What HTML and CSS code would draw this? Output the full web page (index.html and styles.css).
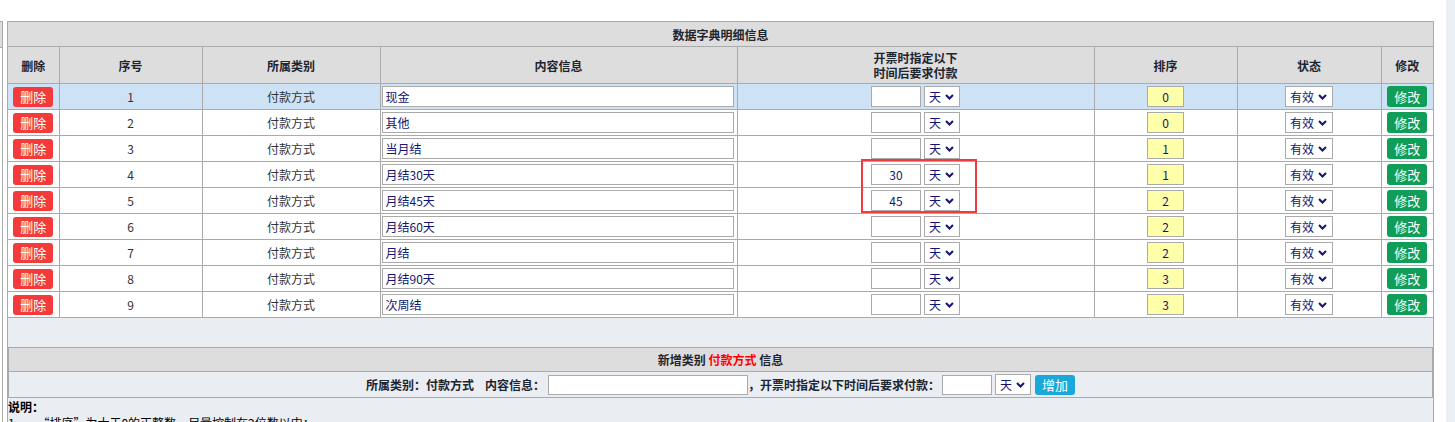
FILE: index.html
```html
<!DOCTYPE html>
<html>

<head>
    <meta charset="utf-8">
    <title>数据字典明细信息</title>
    <link rel="stylesheet" href="styles.css">
</head>

<body>
<div class="page">
    <div class="side">
        <div class="side-head"></div>
    </div>

    <div class="main">
        <table class="grid">
            <colgroup>
                <col style="width:51px">
                <col style="width:143px">
                <col style="width:178px">
                <col style="width:357px">
                <col style="width:357px">
                <col style="width:143px">
                <col style="width:144px">
                <col style="width:52px">
            </colgroup>
            <tr class="title-row">
                <th colspan="8">数据字典明细信息</th>
            </tr>
            <tr class="head-row">
                <th>删除</th>
                <th>序号</th>
                <th>所属类别</th>
                <th>内容信息</th>
                <th>开票时指定以下<br>时间后要求付款</th>
                <th>排序</th>
                <th>状态</th>
                <th>修改</th>
            </tr>
            <tr class="cur">
                <td><button class="btn del">删除</button></td>
                <td>1</td>
                <td>付款方式</td>
                <td class="left"><input class="txt" value="现金"></td>
                <td><input class="days" value=""><div class="sel day"><span>天</span><svg width="9" height="6" viewBox="0 0 9 6"><path d="M1 1 L4.5 4.5 L8 1" fill="none" stroke="#14146e" stroke-width="2"/></svg></div></td>
                <td><input class="ord" value="0"></td>
                <td><div class="sel state"><span>有效</span><svg width="9" height="6" viewBox="0 0 9 6"><path d="M1 1 L4.5 4.5 L8 1" fill="none" stroke="#14146e" stroke-width="2"/></svg></div></td>
                <td><button class="btn edit">修改</button></td>
            </tr>
            <tr>
                <td><button class="btn del">删除</button></td>
                <td>2</td>
                <td>付款方式</td>
                <td class="left"><input class="txt" value="其他"></td>
                <td><input class="days" value=""><div class="sel day"><span>天</span><svg width="9" height="6" viewBox="0 0 9 6"><path d="M1 1 L4.5 4.5 L8 1" fill="none" stroke="#14146e" stroke-width="2"/></svg></div></td>
                <td><input class="ord" value="0"></td>
                <td><div class="sel state"><span>有效</span><svg width="9" height="6" viewBox="0 0 9 6"><path d="M1 1 L4.5 4.5 L8 1" fill="none" stroke="#14146e" stroke-width="2"/></svg></div></td>
                <td><button class="btn edit">修改</button></td>
            </tr>
            <tr>
                <td><button class="btn del">删除</button></td>
                <td>3</td>
                <td>付款方式</td>
                <td class="left"><input class="txt" value="当月结"></td>
                <td><input class="days" value=""><div class="sel day"><span>天</span><svg width="9" height="6" viewBox="0 0 9 6"><path d="M1 1 L4.5 4.5 L8 1" fill="none" stroke="#14146e" stroke-width="2"/></svg></div></td>
                <td><input class="ord" value="1"></td>
                <td><div class="sel state"><span>有效</span><svg width="9" height="6" viewBox="0 0 9 6"><path d="M1 1 L4.5 4.5 L8 1" fill="none" stroke="#14146e" stroke-width="2"/></svg></div></td>
                <td><button class="btn edit">修改</button></td>
            </tr>
            <tr>
                <td><button class="btn del">删除</button></td>
                <td>4</td>
                <td>付款方式</td>
                <td class="left"><input class="txt" value="月结30天"></td>
                <td><input class="days" value="30"><div class="sel day"><span>天</span><svg width="9" height="6" viewBox="0 0 9 6"><path d="M1 1 L4.5 4.5 L8 1" fill="none" stroke="#14146e" stroke-width="2"/></svg></div></td>
                <td><input class="ord" value="1"></td>
                <td><div class="sel state"><span>有效</span><svg width="9" height="6" viewBox="0 0 9 6"><path d="M1 1 L4.5 4.5 L8 1" fill="none" stroke="#14146e" stroke-width="2"/></svg></div></td>
                <td><button class="btn edit">修改</button></td>
            </tr>
            <tr>
                <td><button class="btn del">删除</button></td>
                <td>5</td>
                <td>付款方式</td>
                <td class="left"><input class="txt" value="月结45天"></td>
                <td><input class="days" value="45"><div class="sel day"><span>天</span><svg width="9" height="6" viewBox="0 0 9 6"><path d="M1 1 L4.5 4.5 L8 1" fill="none" stroke="#14146e" stroke-width="2"/></svg></div></td>
                <td><input class="ord" value="2"></td>
                <td><div class="sel state"><span>有效</span><svg width="9" height="6" viewBox="0 0 9 6"><path d="M1 1 L4.5 4.5 L8 1" fill="none" stroke="#14146e" stroke-width="2"/></svg></div></td>
                <td><button class="btn edit">修改</button></td>
            </tr>
            <tr>
                <td><button class="btn del">删除</button></td>
                <td>6</td>
                <td>付款方式</td>
                <td class="left"><input class="txt" value="月结60天"></td>
                <td><input class="days" value=""><div class="sel day"><span>天</span><svg width="9" height="6" viewBox="0 0 9 6"><path d="M1 1 L4.5 4.5 L8 1" fill="none" stroke="#14146e" stroke-width="2"/></svg></div></td>
                <td><input class="ord" value="2"></td>
                <td><div class="sel state"><span>有效</span><svg width="9" height="6" viewBox="0 0 9 6"><path d="M1 1 L4.5 4.5 L8 1" fill="none" stroke="#14146e" stroke-width="2"/></svg></div></td>
                <td><button class="btn edit">修改</button></td>
            </tr>
            <tr>
                <td><button class="btn del">删除</button></td>
                <td>7</td>
                <td>付款方式</td>
                <td class="left"><input class="txt" value="月结"></td>
                <td><input class="days" value=""><div class="sel day"><span>天</span><svg width="9" height="6" viewBox="0 0 9 6"><path d="M1 1 L4.5 4.5 L8 1" fill="none" stroke="#14146e" stroke-width="2"/></svg></div></td>
                <td><input class="ord" value="2"></td>
                <td><div class="sel state"><span>有效</span><svg width="9" height="6" viewBox="0 0 9 6"><path d="M1 1 L4.5 4.5 L8 1" fill="none" stroke="#14146e" stroke-width="2"/></svg></div></td>
                <td><button class="btn edit">修改</button></td>
            </tr>
            <tr>
                <td><button class="btn del">删除</button></td>
                <td>8</td>
                <td>付款方式</td>
                <td class="left"><input class="txt" value="月结90天"></td>
                <td><input class="days" value=""><div class="sel day"><span>天</span><svg width="9" height="6" viewBox="0 0 9 6"><path d="M1 1 L4.5 4.5 L8 1" fill="none" stroke="#14146e" stroke-width="2"/></svg></div></td>
                <td><input class="ord" value="3"></td>
                <td><div class="sel state"><span>有效</span><svg width="9" height="6" viewBox="0 0 9 6"><path d="M1 1 L4.5 4.5 L8 1" fill="none" stroke="#14146e" stroke-width="2"/></svg></div></td>
                <td><button class="btn edit">修改</button></td>
            </tr>
            <tr>
                <td><button class="btn del">删除</button></td>
                <td>9</td>
                <td>付款方式</td>
                <td class="left"><input class="txt" value="次周结"></td>
                <td><input class="days" value=""><div class="sel day"><span>天</span><svg width="9" height="6" viewBox="0 0 9 6"><path d="M1 1 L4.5 4.5 L8 1" fill="none" stroke="#14146e" stroke-width="2"/></svg></div></td>
                <td><input class="ord" value="3"></td>
                <td><div class="sel state"><span>有效</span><svg width="9" height="6" viewBox="0 0 9 6"><path d="M1 1 L4.5 4.5 L8 1" fill="none" stroke="#14146e" stroke-width="2"/></svg></div></td>
                <td><button class="btn edit">修改</button></td>
            </tr>
        </table>

        <div class="spacer"></div>

        <table class="add">
            <tr class="add-head">
                <td>新增类别 <span class="red">付款方式</span> 信息</td>
            </tr>
            <tr class="add-form">
                <td>
                    <div class="form-line">
                        <span class="lbl">所属类别：付款方式</span>
                        <span class="lbl gap">内容信息：</span>
                        <input class="txt new-txt" value="">
                        <span class="lbl">，开票时指定以下时间后要求付款：</span>
                        <input class="days" value="">
                        <div class="sel day"><span>天</span><svg width="9" height="6" viewBox="0 0 9 6"><path d="M1 1 L4.5 4.5 L8 1" fill="none" stroke="#14146e" stroke-width="2"/></svg></div>
                        <button class="btn add-btn">增加</button>
                    </div>
                </td>
            </tr>
        </table>

        <div class="note">
            <b>说明：</b><br>
            1、&nbsp;&nbsp;&nbsp;&nbsp;“排序”为大于0的正整数，尽量控制在2位数以内；
        </div>

        <!-- 标注框 -->
        <div class="mark"></div>
    </div>

    <div class="gutter"></div>
</div>
</body>

</html>
```

FILE: styles.css
```css
html,
body {
    margin: 0;
    padding: 0;
}

body {
    font-family: "Noto Sans CJK SC", "Microsoft YaHei", sans-serif;
    font-size: 12px;
    color: #333;
    background: #fff;
}

.page {
    display: flex;
    align-items: flex-start;
    height: 422px;
    overflow: hidden;
}

.side {
    width: 2px;
    height: 401px;
    margin-top: 21px;
    border-right: 1px solid #aaa;
}

.side-head {
    height: 25px;
    background: #ddd;
    border-top: 1px solid #aaa;
    border-bottom: 1px solid #aaa;
}

.main {
    position: relative;
    box-sizing: border-box;
    width: 1427px;
    height: 401px;
    margin: 21px 0 0 4px;
    background: #eaedf2;
    border-left: 1px solid #aaa;
    border-right: 1px solid #aaa;
}

.gutter {
    width: 9px;
    height: 422px;
    margin-left: auto;
    background: #eceff5;
}

/* 明细表 */
.grid {
    width: 100%;
    border-collapse: collapse;
    table-layout: fixed;
    background: #fff;
}

.grid th,
.grid td {
    border: 1px solid #aaa;
    padding: 0;
    text-align: center;
    vertical-align: middle;
}

.grid tr > :first-child {
    border-left: none;
}

.grid tr > :last-child {
    border-right: none;
}

.grid th {
    background: #ddd;
    color: #1d2530;
    font-weight: bold;
    line-height: 15px;
}

.title-row {
    height: 25px;
}

.head-row {
    height: 37px;
}

.grid td {
    height: 25px;
}

.grid .cur td {
    background: #cde2f4;
}

.grid td.left {
    text-align: left;
    padding-left: 1px;
}

input {
    font-family: "Noto Sans CJK SC", "Microsoft YaHei", sans-serif;
    font-size: 12px;
    color: #14146e;
    box-sizing: border-box;
    height: 21px;
    margin: 0;
    padding: 0 3px;
    border: 1px solid #aaa;
    background: #fff;
    vertical-align: middle;
    outline: none;
}

.txt {
    width: 352px;
}

.days {
    width: 50px;
    text-align: center;
}

.ord {
    width: 37px;
    text-align: center;
    background: #ffffaa;
}

.sel {
    display: inline-flex;
    align-items: center;
    box-sizing: border-box;
    height: 21px;
    padding: 0 5px 0 4px;
    gap: 4px;
    border: 1px solid #aaa;
    background: #fff;
    color: #14146e;
    font-size: 12px;
    vertical-align: middle;
}

.sel.day {
    width: 36px;
    margin-left: 3px;
}

.sel.state {
    width: 48px;
}

.btn {
    font-family: "Noto Sans CJK SC", "Microsoft YaHei", sans-serif;
    font-size: 13px;
    color: #fff;
    box-sizing: border-box;
    width: 40px;
    height: 20px;
    margin: 0;
    padding: 0;
    border: none;
    border-radius: 3px;
    line-height: 20px;
    vertical-align: middle;
}

.del {
    background: #f43a3a;
}

.edit {
    height: 21px;
    background: #0f9d58;
}

/* 新增 */
.spacer {
    height: 29px;
}

.add {
    width: 100%;
    border-collapse: collapse;
}

.add td {
    border: 1px solid #aaa;
    padding: 0;
    text-align: center;
}

.add-head td {
    height: 23px;
    background: #ddd;
    color: #1d2530;
    font-weight: bold;
}

.red {
    color: #f00;
}

.add-form td {
    height: 25px;
}

.form-line {
    display: flex;
    justify-content: center;
    align-items: center;
    color: #1d2530;
}

.lbl {
    font-weight: bold;
}

.lbl.gap {
    margin-left: 11px;
    margin-right: 3px;
}

.new-txt {
    width: 200px;
    height: 20px;
}

.form-line .days {
    height: 20px;
    margin-left: 2px;
}

.add-btn {
    margin-left: 4px;
    background: #1aa7d9;
}

.note {
    padding-top: 1px;
    line-height: 16px;
    color: #000;
}

.mark {
    position: absolute;
    left: 853px;
    top: 138px;
    box-sizing: border-box;
    width: 116px;
    height: 54px;
    border: 2px solid #f03c3c;
}
```
